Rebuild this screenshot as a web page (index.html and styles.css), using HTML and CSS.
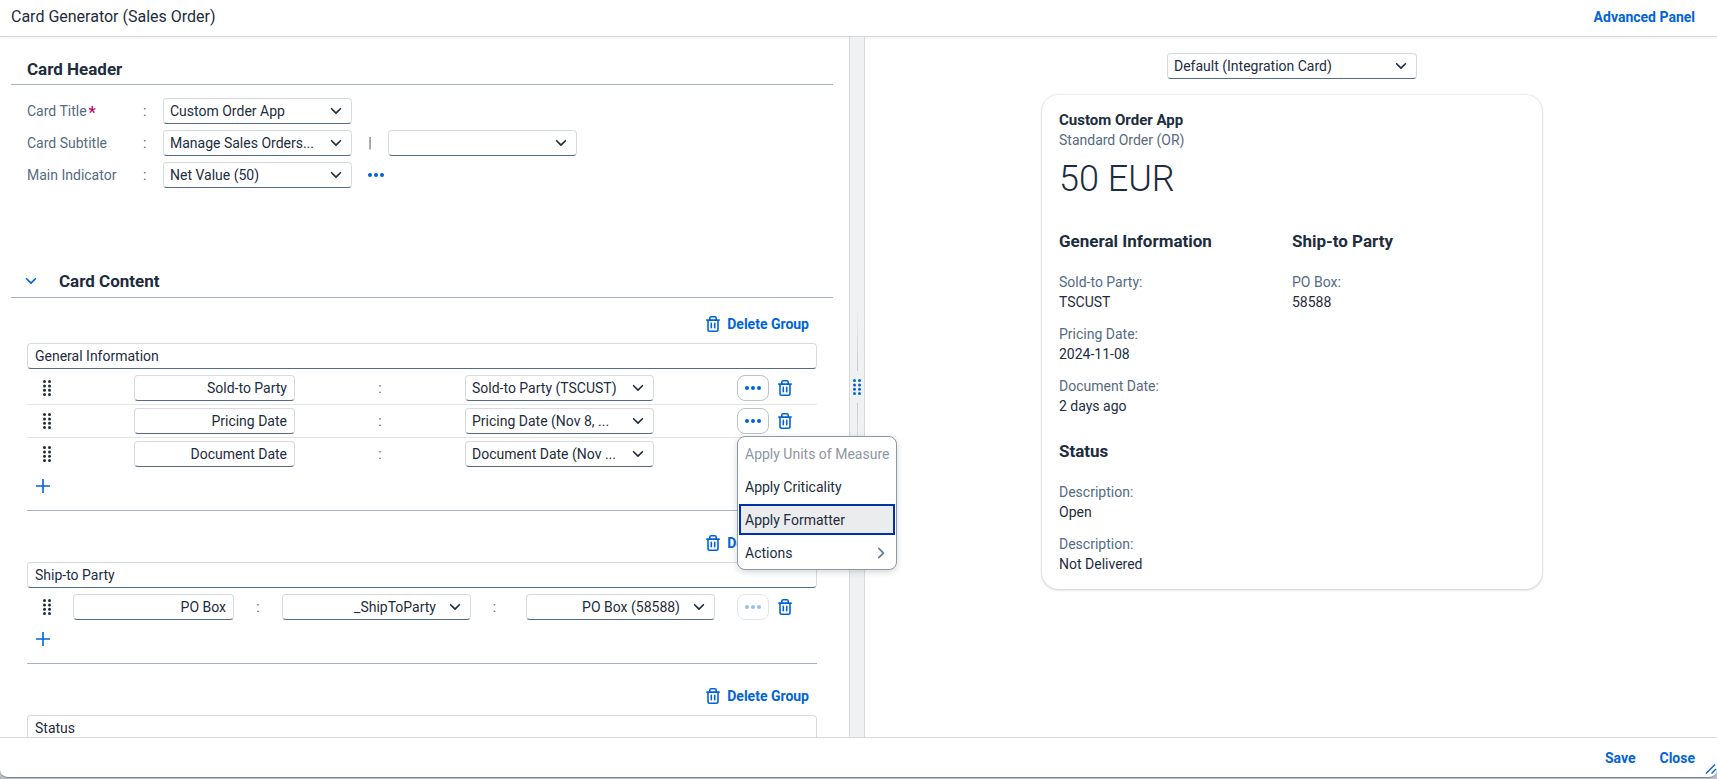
FILE: index.html
```html
<!DOCTYPE html>
<html lang="en">
<head>
<meta charset="utf-8">
<title>Card Generator (Sales Order)</title>
<link rel="stylesheet" href="styles.css">
</head>
<body>
<svg class="sprite" aria-hidden="true">
  <symbol id="chevron" viewBox="0 0 16 16"><path d="M3.6 5.7 8 10.1l4.4-4.4" fill="none" stroke="currentColor" stroke-width="1.6" stroke-linecap="round" stroke-linejoin="round"/></symbol>
  <symbol id="chevron-right" viewBox="0 0 16 16"><path d="M5.8 3.4 10.4 8l-4.6 4.6" fill="none" stroke="currentColor" stroke-width="1.8" stroke-linecap="round" stroke-linejoin="round"/></symbol>
  <symbol id="dots" viewBox="0 0 16 16"><circle cx="2" cy="8" r="2"/><circle cx="8" cy="8" r="2"/><circle cx="14" cy="8" r="2"/></symbol>
  <symbol id="grip" viewBox="0 0 8 16"><circle cx="1.5" cy="1.5" r="1.5"/><circle cx="6.5" cy="1.5" r="1.5"/><circle cx="1.5" cy="5.9" r="1.5"/><circle cx="6.5" cy="5.9" r="1.5"/><circle cx="1.5" cy="10.2" r="1.5"/><circle cx="6.5" cy="10.2" r="1.5"/><circle cx="1.5" cy="14.5" r="1.5"/><circle cx="6.5" cy="14.5" r="1.5"/></symbol>
  <symbol id="plus" viewBox="0 0 16 16"><path d="M8 1v14M1 8h14" fill="none" stroke="currentColor" stroke-width="1.6"/></symbol>
  <symbol id="trash" viewBox="0 0 16 16"><path d="M1.8 4.1h12.4M4.8 4V2.3c0-.9.6-1.5 1.4-1.5h3.6c.8 0 1.4.6 1.4 1.5V4M3 4.3v9.2c0 1 .7 1.7 1.7 1.7h6.6c1 0 1.7-.7 1.7-1.7V4.3M6.3 7.4v4.4M9.7 7.4v4.4" fill="none" stroke="currentColor" stroke-width="1.6" stroke-linecap="round" stroke-linejoin="round"/></symbol>
</svg>

<div class="dialog">
  <header class="dialog-header">
    <h1 class="dialog-title">Card Generator (Sales Order)</h1>
    <button class="link-button">Advanced Panel</button>
  </header>

  <div class="panes">
    <main class="editor">
      <h2 class="section-title">Card Header</h2>
      <div class="header-form">
        <label class="form-label required" for="card-title">Card Title</label><span class="colon">:</span>
        <div class="form-fields">
          <div class="select"><select id="card-title"><option>Custom Order App</option></select><svg><use href="#chevron"/></svg></div>
        </div>
        <label class="form-label" for="card-subtitle">Card Subtitle</label><span class="colon">:</span>
        <div class="form-fields">
          <div class="select"><select id="card-subtitle"><option>Manage Sales Orders...</option></select><svg><use href="#chevron"/></svg></div>
          <span class="divider">|</span>
          <div class="select"><select aria-label="Card Subtitle, second part"><option></option></select><svg><use href="#chevron"/></svg></div>
        </div>
        <label class="form-label" for="indicator">Main Indicator</label><span class="colon">:</span>
        <div class="form-fields">
          <div class="select"><select id="indicator"><option>Net Value (50)</option></select><svg><use href="#chevron"/></svg></div>
          <button class="icon-button" aria-label="Main indicator options"><svg><use href="#dots"/></svg></button>
        </div>
      </div>

      <h2 class="section-title collapsible"><button class="icon-button" aria-label="Collapse Card Content"><svg><use href="#chevron"/></svg></button>Card Content</h2>

      <section class="group first">
        <button class="link-button delete-group"><svg><use href="#trash"/></svg>Delete Group</button>
        <input class="field" aria-label="Group name" value="General Information">
        <ul class="rows">
          <li class="row">
            <svg class="grip"><use href="#grip"/></svg>
            <input class="field right" aria-label="Label" value="Sold-to Party">
            <span class="colon">:</span>
            <div class="select"><select aria-label="Property"><option>Sold-to Party (TSCUST)</option></select><svg><use href="#chevron"/></svg></div>
            <div class="actions">
              <button class="more" aria-label="More"><svg><use href="#dots"/></svg></button>
              <button class="icon-button" aria-label="Delete"><svg><use href="#trash"/></svg></button>
            </div>
          </li>
          <li class="row">
            <svg class="grip"><use href="#grip"/></svg>
            <input class="field right" aria-label="Label" value="Pricing Date">
            <span class="colon">:</span>
            <div class="select"><select aria-label="Property"><option>Pricing Date (Nov 8, ...</option></select><svg><use href="#chevron"/></svg></div>
            <div class="actions">
              <button class="more" aria-label="More" aria-expanded="true"><svg><use href="#dots"/></svg></button>
              <button class="icon-button" aria-label="Delete"><svg><use href="#trash"/></svg></button>
              <div class="menu" role="menu">
                <button class="menu-item" role="menuitem" disabled>Apply Units of Measure</button>
                <button class="menu-item" role="menuitem">Apply Criticality</button>
                <button class="menu-item focused" role="menuitem">Apply Formatter</button>
                <button class="menu-item" role="menuitem">Actions<svg><use href="#chevron-right"/></svg></button>
              </div>
            </div>
          </li>
          <li class="row">
            <svg class="grip"><use href="#grip"/></svg>
            <input class="field right" aria-label="Label" value="Document Date">
            <span class="colon">:</span>
            <div class="select"><select aria-label="Property"><option>Document Date (Nov ...</option></select><svg><use href="#chevron"/></svg></div>
            <div class="actions">
              <button class="more" aria-label="More"><svg><use href="#dots"/></svg></button>
              <button class="icon-button" aria-label="Delete"><svg><use href="#trash"/></svg></button>
            </div>
          </li>
        </ul>
        <button class="icon-button add" aria-label="Add row"><svg><use href="#plus"/></svg></button>
      </section>

      <section class="group">
        <button class="link-button delete-group"><svg><use href="#trash"/></svg>Delete Group</button>
        <input class="field" aria-label="Group name" value="Ship-to Party">
        <ul class="rows">
          <li class="row nested">
            <svg class="grip"><use href="#grip"/></svg>
            <input class="field right" aria-label="Label" value="PO Box">
            <span class="colon">:</span>
            <div class="select right"><select aria-label="Entity"><option>_ShipToParty</option></select><svg><use href="#chevron"/></svg></div>
            <span class="colon">:</span>
            <div class="select right"><select aria-label="Property"><option>PO Box (58588)</option></select><svg><use href="#chevron"/></svg></div>
            <div class="actions">
              <button class="more" aria-label="More" disabled><svg><use href="#dots"/></svg></button>
              <button class="icon-button" aria-label="Delete"><svg><use href="#trash"/></svg></button>
            </div>
          </li>
        </ul>
        <button class="icon-button add" aria-label="Add row"><svg><use href="#plus"/></svg></button>
      </section>

      <section class="group">
        <button class="link-button delete-group"><svg><use href="#trash"/></svg>Delete Group</button>
        <input class="field" aria-label="Group name" value="Status">
      </section>
    </main>

    <div class="splitter" role="separator" aria-orientation="vertical">
      <span class="splitter-line"></span>
      <svg class="grip"><use href="#grip"/></svg>
      <span class="splitter-line down"></span>
    </div>

    <aside class="preview">
      <div class="select type"><select aria-label="Card type"><option>Default (Integration Card)</option></select><svg><use href="#chevron"/></svg></div>
      <article class="card">
        <h2 class="card-title">Custom Order App</h2>
        <p class="card-subtitle">Standard Order (OR)</p>
        <p class="card-indicator">50 EUR</p>
        <div class="card-groups">
          <section>
            <h3 class="card-group-title">General Information</h3>
            <dl class="facts">
              <div><dt>Sold-to Party:</dt><dd>TSCUST</dd></div>
              <div><dt>Pricing Date:</dt><dd>2024-11-08</dd></div>
              <div><dt>Document Date:</dt><dd>2 days ago</dd></div>
            </dl>
          </section>
          <section>
            <h3 class="card-group-title">Ship-to Party</h3>
            <dl class="facts">
              <div><dt>PO Box:</dt><dd>58588</dd></div>
            </dl>
          </section>
          <section>
            <h3 class="card-group-title">Status</h3>
            <dl class="facts">
              <div><dt>Description:</dt><dd>Open</dd></div>
              <div><dt>Description:</dt><dd>Not Delivered</dd></div>
            </dl>
          </section>
        </div>
      </article>
    </aside>
  </div>

  <footer class="dialog-footer">
    <button class="link-button">Save</button>
    <button class="link-button">Close</button>
    <svg class="resize" viewBox="0 0 12 12"><path d="M1 10.500 10 1.500M6.500 10.500l4.500-4.500" fill="none" stroke="currentColor" stroke-width="1.400"/></svg>
  </footer>
</div>
</body>
</html>
```
FILE: styles.css
```css
* { box-sizing: border-box; }

body {
  margin: 0;
  background: #b9bdc1;
  color: #1d2d3e;
  font: 14px/20px Roboto, "Noto Sans", sans-serif;
}

h1, h2, h3, p, dl, dd, ul { margin: 0; padding: 0; }
button, input, select { font: inherit; color: inherit; margin: 0; }
button { border: 0; background: none; padding: 0; }
svg { display: block; flex: none; width: 16px; height: 16px; fill: currentColor; }
.sprite { position: absolute; width: 0; height: 0; }

.dialog {
  display: flex;
  flex-direction: column;
  height: calc(100vh - 1px);
  background: #fff;
  border-bottom: 1px solid #7b858e;
  border-radius: 0 0 8px 8px;
}

.dialog-header {
  display: flex;
  align-items: center;
  justify-content: space-between;
  height: 37px;
  padding: 0 22px 2px 11px;
  border-bottom: 1px solid #d9d9d9;
  box-shadow: 0 1px 2px #00000010;
}
.dialog-title { font-size: 16px; font-weight: 400; }

.link-button {
  display: inline-flex;
  align-items: center;
  color: #0064d9;
  font-weight: 700;
}

.panes {
  display: grid;
  grid-template-columns: 849fr 16px 852fr;
  flex: 1;
  min-height: 0;
}

/* Editor */
.editor {
  position: relative;
  z-index: 1;
  min-width: 0;
  min-height: 0;
  padding: 18px 16px 0 11px;
  overflow-x: visible;
  overflow-y: clip;
}

.section-title {
  display: flex;
  align-items: center;
  height: 30px;
  padding: 0 16px 1px;
  border-bottom: 1px solid #a8b3bd;
  font-size: 17px;
  font-weight: 700;
}
.section-title.collapsible { gap: 20px; margin-top: 79px; padding-left: 12px; height: 31px; padding-bottom: 3px; }

.header-form {
  display: grid;
  grid-template-columns: 116px 20px 1fr;
  row-gap: 6px;
  padding: 13px 0 0 16px;
  align-items: center;
}
.form-label { color: #556b82; }
.required::after { content: "*"; margin-left: 2px; color: #ba066c; font-size: 16px; font-weight: 700; line-height: 16px; vertical-align: -2px; }
.form-fields { display: flex; align-items: center; }
.form-fields .select { width: 189px; }
.divider { width: 36px; text-align: center; color: #556b82; }
.form-fields .icon-button { margin-left: 16px; }
.colon { color: #556b82; }

.field,
.select select {
  width: 100%;
  height: 26px;
  padding: 0 7px;
  border: 1px solid #d5dbe1;
  border-bottom-color: #556b82;
  border-radius: 4px;
  background: #fff;
  outline: none;
}
.select { position: relative; }
.select select { appearance: none; padding: 0 34px 0 6px; }
.select svg { position: absolute; right: 8px; top: 5px; pointer-events: none; }
.right, .right select { text-align: right; text-align-last: right; }

.icon-button { color: #0064d9; }

.group { padding: 19px 0 0; margin: 0 16px; border-bottom: 1px solid #a8b3bd; }
.group.first { padding-top: 13px; }
.group > .field { display: block; margin-top: 6px; }
.delete-group { display: flex; gap: 6px; height: 26px; margin-left: auto; padding-right: 8px; }

.rows { list-style: none; padding-top: 3px; }
.row {
  display: grid;
  grid-template-columns: 107fr 161fr 170fr 189fr 83fr 80fr;
  align-items: center;
  height: 33px;
  border-bottom: 1px solid #e5e5e5;
}
.row:last-child { border-bottom-color: transparent; }
.row .colon { text-align: center; }
.row .actions { grid-column: -2; }
.row.nested { grid-template-columns: 46fr 161fr 48fr 189fr 55fr 189fr 22fr 80fr; }
.nested .select + .colon { padding-right: 8px; }
.grip { width: 8px; }
.row .grip { margin-left: 16px; }

.actions { position: relative; display: flex; align-items: center; gap: 8px; }
.more {
  display: flex;
  align-items: center;
  justify-content: center;
  width: 32px;
  height: 26px;
  border: 1px solid #bcc3ca;
  border-radius: 8px;
  background: #fff;
  color: #0064d9;
}
.more:disabled { opacity: .4; }
.add { display: flex; align-items: center; height: 30px; margin: 0 0 9px 8px; }

.menu {
  position: absolute;
  z-index: 2;
  top: 100%;
  left: 0;
  margin-top: 2px;
  padding: 1px;
  border: 1px solid #8d98a4;
  border-radius: 8px;
  background: #fff;
  box-shadow: 0 2px 6px #22354833;
}
.menu-item {
  display: flex;
  align-items: center;
  justify-content: space-between;
  width: 156px;
  height: 31px;
  margin-bottom: 2px;
  padding: 0 6px;
  white-space: nowrap;
}
.menu-item:last-child { margin-bottom: 0; }
.menu-item:disabled { color: #8e969f; }
.menu-item svg { color: #6f8398; }
.menu-item.focused { background: #eaecee; box-shadow: inset 0 0 0 2px #0032a5; }

/* Splitter */
.splitter {
  display: flex;
  flex-direction: column;
  align-items: center;
  justify-content: center;
  gap: 8px;
  border: solid #d9d9d9;
  border-width: 0 1px;
  background: #eff1f2;
  color: #0064d9;
}
.splitter-line { width: 1px; height: 64px; background: linear-gradient(to top, #c8ccd0, #eff1f2); }
.splitter-line.down { background: linear-gradient(#c8ccd0, #eff1f2); }

/* Preview */
.preview {
  display: flex;
  flex-direction: column;
  align-items: center;
  gap: 16px;
  padding: 16px 0 16px 2px;
  min-width: 0;
}
.select.type { width: 250px; }
.card {
  width: 500px;
  max-width: 100%;
  padding: 15px 17px;
  border-radius: 16px;
  box-shadow: 0 0 2px #22354833, 0 1px 3px #22354833;
}
.card-title { font-size: 15px; }
.card-subtitle { color: #556b82; }
.card-indicator { padding: 5px 0 28px; font-size: 36px; font-weight: 300; line-height: 48px; }
.card-groups { display: grid; grid-template-columns: 1fr 1fr; row-gap: 25px; }
.card-group-title { font-size: 17px; margin: 0 0 21px; }
.facts { display: grid; gap: 12px; }
.facts dt { color: #556b82; }

.dialog-footer {
  position: relative;
  display: flex;
  align-items: center;
  justify-content: flex-end;
  gap: 24px;
  height: 40px;
  padding: 0 22px 0 0;
  border-top: 1px solid #d9d9d9;
}
.resize { position: absolute; right: 0; bottom: 2px; width: 12px; height: 12px; color: #0064d9; }
```
